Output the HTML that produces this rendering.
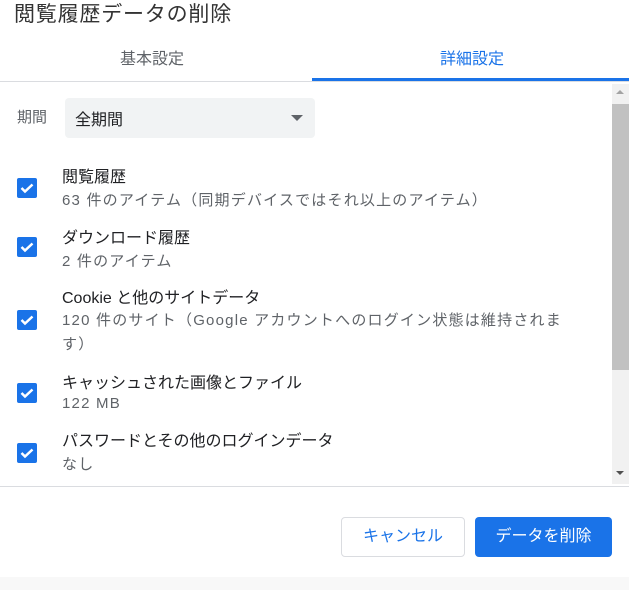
<!DOCTYPE html><html><head><meta charset="utf-8"><style>
body{margin:0;width:629px;height:590px;overflow:hidden;background:#fff;font-family:"Liberation Sans","Noto Sans CJK JP",sans-serif;color:#202124;position:relative}
.a{position:absolute;white-space:nowrap}
.cb{position:absolute;left:17px;width:20px;height:20px;background:#1a73e8;border-radius:2px}
.t{font-size:16px;color:#202124}
.s{font-size:15px;color:#5f6368;letter-spacing:1.2px}
</style></head><body>
<div class="a" style="left:14px;top:-2px;font-size:21px;color:#333;letter-spacing:0.8px">閲覧履歴データの削除</div>
<div class="a" style="left:120px;top:45px;font-size:16px;color:#5f6368">基本設定</div>
<div class="a" style="left:440px;top:45px;font-size:16px;color:#1a73e8">詳細設定</div>
<div class="a" style="left:0;top:81px;width:629px;height:1px;background:#dadce0"></div>
<div class="a" style="left:312px;top:78px;width:317px;height:3px;background:#1a73e8"></div>
<div class="a" style="left:612px;top:84px;width:17px;height:400px;background:#f1f1f1"></div>
<div class="a" style="left:612px;top:104px;width:17px;height:266px;background:#c1c1c1"></div>
<div class="a" style="left:616px;top:90px;border:4px solid transparent;border-bottom:4px solid #a3a3a3;border-top:0"></div>
<div class="a" style="left:616px;top:471px;border:4px solid transparent;border-top:4px solid #505050;border-bottom:0"></div>
<div class="a" style="left:17px;top:106px;font-size:15px;color:#5f6368">期間</div>
<div class="a" style="left:65px;top:98px;width:250px;height:40px;background:#f1f3f4;border-radius:4px"></div>
<div class="a" style="left:75px;top:106px;font-size:16px">全期間</div>
<div class="a" style="left:291px;top:115px;border:6px solid transparent;border-top:6px solid #5f6368;border-bottom:0"></div>
<div class="cb" style="top:178px"><svg width="20" height="20"><path d="M4.5 10l3.5 3.5L15.5 6.5" stroke="#fff" stroke-width="2.5" fill="none"/></svg></div>
<div class="a t" style="left:62px;top:163px">閲覧履歴</div>
<div class="a s" style="left:62px;top:189px">63 件のアイテム（同期デバイスではそれ以上のアイテム）</div>
<div class="cb" style="top:237px"><svg width="20" height="20"><path d="M4.5 10l3.5 3.5L15.5 6.5" stroke="#fff" stroke-width="2.5" fill="none"/></svg></div>
<div class="a t" style="left:62px;top:224px">ダウンロード履歴</div>
<div class="a s" style="left:62px;top:250px">2 件のアイテム</div>
<div class="cb" style="top:310px"><svg width="20" height="20"><path d="M4.5 10l3.5 3.5L15.5 6.5" stroke="#fff" stroke-width="2.5" fill="none"/></svg></div>
<div class="a t" style="left:62px;top:284px">Cookie と他のサイトデータ</div>
<div class="a s" style="left:62px;top:309px">120 件のサイト（Google アカウントへのログイン状態は維持されま</div>
<div class="a s" style="left:62px;top:333px">す）</div>
<div class="cb" style="top:383px"><svg width="20" height="20"><path d="M4.5 10l3.5 3.5L15.5 6.5" stroke="#fff" stroke-width="2.5" fill="none"/></svg></div>
<div class="a t" style="left:62px;top:369px">キャッシュされた画像とファイル</div>
<div class="a s" style="left:62px;top:395px">122 MB</div>
<div class="cb" style="top:443px"><svg width="20" height="20"><path d="M4.5 10l3.5 3.5L15.5 6.5" stroke="#fff" stroke-width="2.5" fill="none"/></svg></div>
<div class="a t" style="left:62px;top:427px">パスワードとその他のログインデータ</div>
<div class="a s" style="left:62px;top:453px">なし</div>
<div class="a" style="left:0;top:486px;width:629px;height:1px;background:#dadce0"></div>
<div class="a" style="left:341px;top:517px;width:122px;height:38px;border:1px solid #dadce0;border-radius:4px;color:#1a73e8;font-size:16px;text-align:center;line-height:38px">キャンセル</div>
<div class="a" style="left:475px;top:517px;width:137px;height:40px;background:#1a73e8;border-radius:4px;color:#fff;font-size:16px;text-align:center;line-height:40px">データを削除</div>
<div class="a" style="left:0;top:577px;width:629px;height:13px;background:#f8f8f8"></div>
</body></html>
